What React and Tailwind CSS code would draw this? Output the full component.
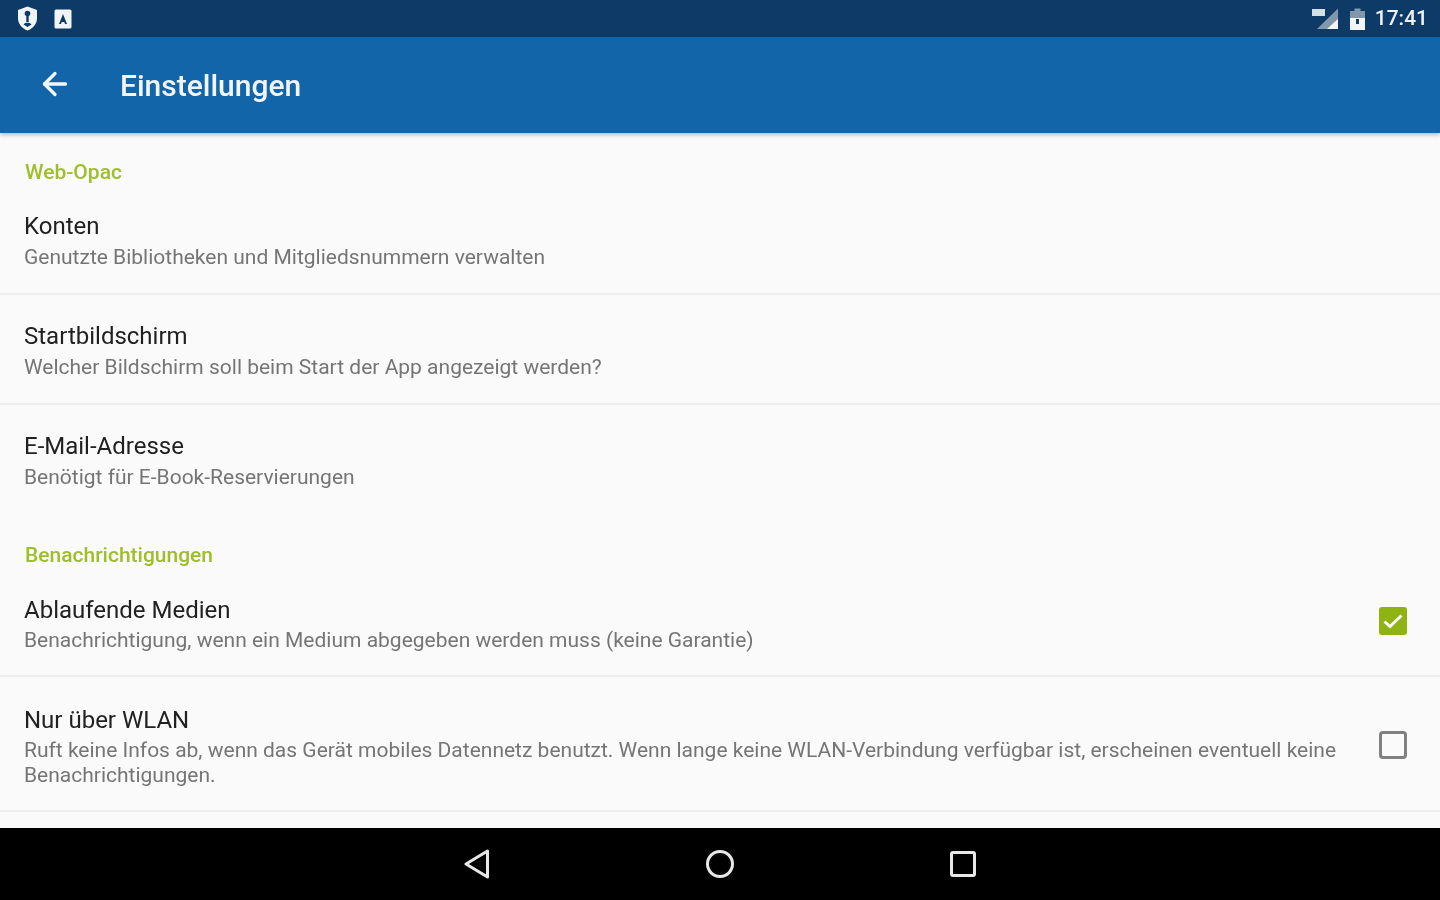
import { ArrowLeft } from "lucide-react";

function Row({ title, sub, checked, tight }) {
  return (
    <div className="flex items-center pl-6 pr-[33px]">
      <div className="flex-1 min-w-0 blur-[0.5px]">
        <div className="text-[24px] leading-[30px] text-[#212121]">{title}</div>
        <div className={`${tight ? "mt-[3px]" : "mt-[4px]"} text-[21px] leading-[25px] text-[#757575]`}>{sub}</div>
      </div>
      {checked === true && (
        <div className="ml-[36px] -mt-[6px] flex h-[28px] w-[28px] items-center justify-center rounded-[3px] bg-[#8fb312] blur-[0.5px]">
          <svg width="24" height="24" viewBox="0 0 24 24" fill="none" stroke="#fafafa" strokeWidth="3">
            <path d="M3.500 12.500l5.500 5L20.500 6.500" />
          </svg>
        </div>
      )}
      {checked === false && (
        <div className="ml-[36px] -mt-[4px] h-[28px] w-[28px] rounded-[4px] border-[3px] border-[#808080] blur-[0.5px]" />
      )}
    </div>
  );
}

function SectionTitle({ children }) {
  return <div className="pl-[25px] text-[21px] leading-[25px] font-medium text-[#9ebf2a] blur-[0.5px]">{children}</div>;
}

export default function App() {
  return (
    <div className="flex h-[900px] w-[1440px] flex-col overflow-hidden bg-[#fafafa] font-['Roboto',sans-serif]">
      {/* status bar */}
      <div className="flex h-[37px] shrink-0 items-center justify-between bg-[#0d3a66] pl-[17px] pr-[12px]">
        <div className="flex items-center gap-[16px] blur-[0.5px]">
          <svg width="21" height="25" viewBox="0 0 21 25">
            <path d="M10.500 0.500L1 4v8c0 6 4 10.500 9.500 12.500C16 22.500 20 18 20 12V4z" fill="#f2f5f8" />
            <circle cx="10.500" cy="7.500" r="2.800" fill="#0d3a66" />
            <path d="M9.300 10h2.400v6H9.300zM6.500 18.500c1-2.500 7-2.500 8 0l-4 2.500z" fill="#0d3a66" />
          </svg>
          <svg width="18" height="20" viewBox="0 0 18 20">
            <rect x="0.500" y="0.500" width="17" height="19" rx="1.500" fill="#f2f5f8" />
            <path d="M5 15l4-10 4 10h-2l-.7-2H7.700l-.7 2z" fill="#0d3a66" />
          </svg>
        </div>
        <div className="flex items-center blur-[0.5px]">
          <svg width="26" height="24" viewBox="0 0 26 24">
            <path d="M26 1.500V22H5z" fill="#8397ab" />
            <path d="M26 12V22H15z" fill="#f2f5f8" />
            <rect x="0" y="2" width="13" height="7" fill="#d5dde5" />
          </svg>
          <svg className="ml-[12px]" width="15" height="22" viewBox="0 0 15 22">
            <path d="M4.500 0.500h6v2.500H15v19H0V3h4.500z" fill="#8397ab" />
            <path d="M0 10h15v12H0z" fill="#f2f5f8" />
            <path d="M6 11h3v5H6z" fill="#0d3a66" />
          </svg>
          <span className="ml-[10px] text-[21px] leading-none font-medium text-[#eef2f5]">17:41</span>
        </div>
      </div>

      {/* app bar */}
      <div className="flex h-[96px] shrink-0 items-center bg-[#1265a8] shadow-[0_2px_4px_rgba(0,0,0,0.25)]">
        <ArrowLeft className="ml-[37px] -mt-[3px] text-[#f2f6fa] blur-[0.5px]" size={36} strokeWidth={2.200} />
        <span className="ml-[47px] mt-[2px] text-[30px] leading-none font-medium text-[#f2f6fa] blur-[0.5px]">Einstellungen</span>
      </div>

      {/* settings list */}
      <div className="flex-1 overflow-hidden pt-[27px]">
        <SectionTitle>Web-Opac</SectionTitle>
        <div className="pt-[26px]">
          <div className="pb-[23px] border-b-2 border-[#eeeeee]">
            <Row title="Konten" sub="Genutzte Bibliotheken und Mitgliedsnummern verwalten" />
          </div>
          <div className="pt-[26px] pb-[23px] border-b-2 border-[#eeeeee]">
            <Row title="Startbildschirm" sub="Welcher Bildschirm soll beim Start der App angezeigt werden?" />
          </div>
          <div className="pt-[26px]">
            <Row title="E-Mail-Adresse" sub="Benötigt für E-Book-Reservierungen" />
          </div>
        </div>
        <div className="mt-[53px]">
          <SectionTitle>Benachrichtigungen</SectionTitle>
        </div>
        <div className="pt-[27px]">
          <div className="pb-[22px] border-b-2 border-[#eeeeee]">
            <Row title="Ablaufende Medien" sub="Benachrichtigung, wenn ein Medium abgegeben werden muss (keine Garantie)" checked={true} tight />
          </div>
          <div className="pt-[28px] pb-[22px] border-b-2 border-[#eeeeee]">
            <Row
              title="Nur über WLAN"
              sub="Ruft keine Infos ab, wenn das Gerät mobiles Datennetz benutzt. Wenn lange keine WLAN-Verbindung verfügbar ist, erscheinen eventuell keine Benachrichtigungen."
              checked={false}
              tight
            />
          </div>
        </div>
      </div>

      {/* nav bar */}
      <div className="flex h-[72px] shrink-0 items-center justify-center bg-black">
        <svg className="ml-[-2px] blur-[0.5px]" width="28" height="32" viewBox="0 0 28 32" fill="none" stroke="#e8e8e8" strokeWidth="3" strokeLinejoin="round">
          <path d="M24.500 3v26L3 16z" />
        </svg>
        <svg className="ml-[214px] blur-[0.5px]" width="30" height="30" viewBox="0 0 30 30" fill="none" stroke="#e8e8e8" strokeWidth="3">
          <circle cx="15" cy="15" r="12.500" />
        </svg>
        <svg className="ml-[215px] blur-[0.5px]" width="26" height="26" viewBox="0 0 26 26" fill="none" stroke="#e8e8e8" strokeWidth="3">
          <rect x="1.500" y="1.500" width="23" height="23" rx="1.500" />
        </svg>
      </div>
    </div>
  );
}
